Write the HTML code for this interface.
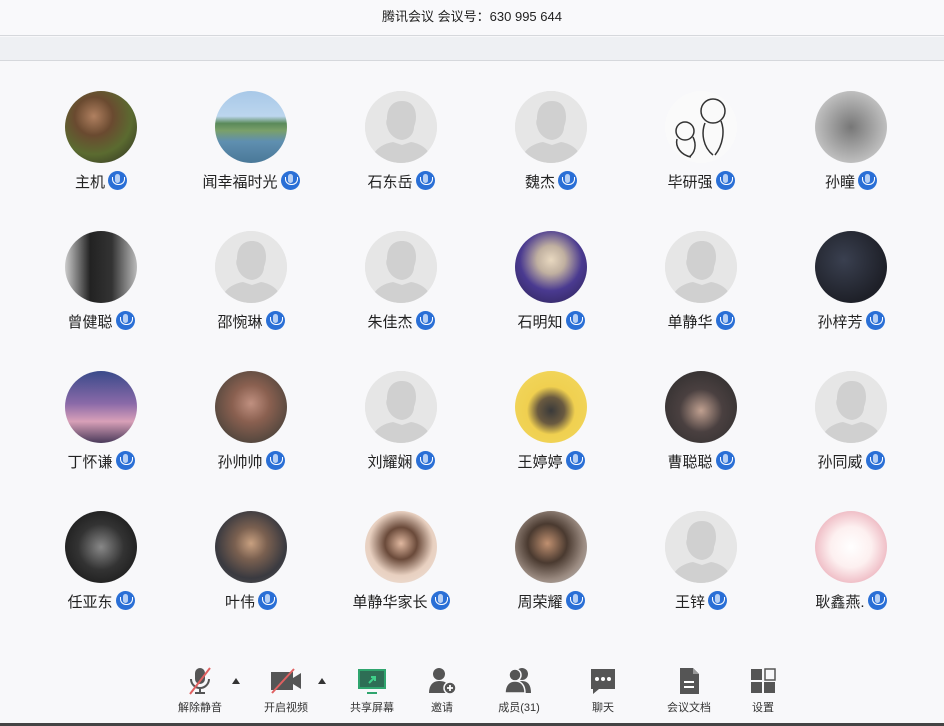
<!DOCTYPE html>
<html><head><meta charset="utf-8"><style>
*{margin:0;padding:0;box-sizing:border-box}
body{width:944px;height:726px;background:#f8f8fa;font-family:"Liberation Sans","Noto Sans CJK SC",sans-serif;position:relative;overflow:hidden;color:#222}
.hdr{position:absolute;left:0;top:0;width:944px;height:36px;background:#f9f9fb;border-bottom:1px solid #d6d8dc;text-align:center;font-size:13px;line-height:33px;color:#222}
.band{position:absolute;left:0;top:37px;width:944px;height:24px;background:#eef0f3;border-bottom:1px solid #d6d8dc}
.cell{position:absolute;width:150px;height:130px}
.av{position:absolute;left:39px;top:0;width:72px;height:72px;border-radius:50%;overflow:hidden;background:#e6e6e6}
.nm{position:absolute;left:0;top:80px;width:150px;text-align:center;font-size:15px;line-height:22px;white-space:nowrap}
.mic{display:inline-block;width:19px;height:19px;border-radius:50%;background:#2a6fd6;vertical-align:-3px;margin-left:3px;position:relative}
.mic:before{content:"";position:absolute;left:7px;top:3px;width:5px;height:9px;border-radius:3px;background:#b8d0f4}
.mic:after{content:"";position:absolute;left:4px;top:6px;width:11px;height:7px;border:1.5px solid #fff;border-top:none;border-radius:0 0 6px 6px}
.tb{position:absolute;top:666px;text-align:center;font-size:11px;color:#333}
.tb .lb{position:absolute;top:33px;left:-40px;width:80px;text-align:center}
.bot{position:absolute;left:0;top:723px;width:944px;height:3px;background:#444}
</style></head><body>
<div class="hdr">腾讯会议 会议号：630 995 644</div>
<div class="band"></div>

<svg width="0" height="0" style="position:absolute"><defs>
<symbol id="def" viewBox="0 0 72 72"><rect width="72" height="72" fill="#e6e6e6"/><path d="M22 28c0-12 6-18 15-18s14 6 14 16c0 4-1 7-2 10 0 6-4 12-12 13-9-1-14-8-15-14-1-2-1-5 0-7z" fill="#d0d0d0"/><path d="M6 72c1-12 10-19 22-21l9 3 9-3c12 2 20 9 21 21z" fill="#d0d0d0"/></symbol>
</defs></svg>

<div class="cell" style="left:26px;top:91px"><div class="av" style="background:radial-gradient(circle at 40% 35%,#b08060 0,#6a4a30 30%,#5b6b30 60%,#2a2a20 100%)"></div><div class="nm">主机<span class="mic"></span></div></div>
<div class="cell" style="left:176px;top:91px"><div class="av" style="background:linear-gradient(#a8c8e8 0,#bcd6ee 35%,#5a8a5a 45%,#7aa06a 55%,#5f8fb0 70%,#4a7898 100%)"></div><div class="nm">闻幸福时光<span class="mic"></span></div></div>
<div class="cell" style="left:326px;top:91px"><svg class="av"><use href="#def"/></svg><div class="nm">石东岳<span class="mic"></span></div></div>
<div class="cell" style="left:476px;top:91px"><svg class="av"><use href="#def"/></svg><div class="nm">魏杰<span class="mic"></span></div></div>
<div class="cell" style="left:626px;top:91px"><svg class="av" viewBox="0 0 72 72" style="background:#fafafa"><g fill="none" stroke="#333" stroke-width="1.5"><circle cx="48" cy="20" r="12"/><path d="M40 32c-4 10-2 24 8 32M56 30c4 10 2 24-6 34"/><circle cx="20" cy="40" r="9"/><path d="M12 48c-2 8 4 16 14 18M28 46c4 8 2 16-4 20"/></g></svg><div class="nm">毕研强<span class="mic"></span></div></div>
<div class="cell" style="left:776px;top:91px"><div class="av" style="background:radial-gradient(circle at 50% 50%,#777 0,#aaa 50%,#ddd 100%)"></div><div class="nm">孙瞳<span class="mic"></span></div></div>

<div class="cell" style="left:26px;top:231px"><div class="av" style="background:linear-gradient(90deg,#ccc 0,#222 35%,#333 65%,#bbb 100%)"></div><div class="nm">曾健聪<span class="mic"></span></div></div>
<div class="cell" style="left:176px;top:231px"><svg class="av"><use href="#def"/></svg><div class="nm">邵惋琳<span class="mic"></span></div></div>
<div class="cell" style="left:326px;top:231px"><svg class="av"><use href="#def"/></svg><div class="nm">朱佳杰<span class="mic"></span></div></div>
<div class="cell" style="left:476px;top:231px"><div class="av" style="background:radial-gradient(circle at 50% 40%,#e8d8c0 0,#c0b0a0 25%,#4a3a90 55%,#2a2050 100%)"></div><div class="nm">石明知<span class="mic"></span></div></div>
<div class="cell" style="left:626px;top:231px"><svg class="av"><use href="#def"/></svg><div class="nm">单静华<span class="mic"></span></div></div>
<div class="cell" style="left:776px;top:231px"><div class="av" style="background:radial-gradient(circle at 40% 40%,#3a4050 0,#1e2028 70%)"></div><div class="nm">孙梓芳<span class="mic"></span></div></div>

<div class="cell" style="left:26px;top:371px"><div class="av" style="background:linear-gradient(#3a4a8a 0,#8a6aa8 45%,#d8a0b8 70%,#4a3a5a 100%)"></div><div class="nm">丁怀谦<span class="mic"></span></div></div>
<div class="cell" style="left:176px;top:371px"><div class="av" style="background:radial-gradient(circle at 50% 45%,#c09080 0,#8a6050 35%,#5a4a40 70%,#333 100%)"></div><div class="nm">孙帅帅<span class="mic"></span></div></div>
<div class="cell" style="left:326px;top:371px"><svg class="av"><use href="#def"/></svg><div class="nm">刘耀娴<span class="mic"></span></div></div>
<div class="cell" style="left:476px;top:371px"><div class="av" style="background:radial-gradient(circle at 50% 55%,#3a3a3a 0,#6a5a40 25%,#f0d050 45%,#f2d860 100%)"></div><div class="nm">王婷婷<span class="mic"></span></div></div>
<div class="cell" style="left:626px;top:371px"><div class="av" style="background:radial-gradient(circle at 50% 55%,#c0a090 0,#4a4040 40%,#2a2a2a 100%)"></div><div class="nm">曹聪聪<span class="mic"></span></div></div>
<div class="cell" style="left:776px;top:371px"><svg class="av"><use href="#def"/></svg><div class="nm">孙同威<span class="mic"></span></div></div>

<div class="cell" style="left:26px;top:511px"><div class="av" style="background:radial-gradient(circle at 50% 50%,#888 0,#333 45%,#111 100%)"></div><div class="nm">任亚东<span class="mic"></span></div></div>
<div class="cell" style="left:176px;top:511px"><div class="av" style="background:radial-gradient(circle at 50% 45%,#c8a080 0,#7a6050 30%,#3a3a40 65%,#555 100%)"></div><div class="nm">叶伟<span class="mic"></span></div></div>
<div class="cell" style="left:326px;top:511px"><div class="av" style="background:radial-gradient(circle at 50% 45%,#e0b8a0 0,#6a4a3a 30%,#e8d0c0 60%,#f0e4dc 100%)"></div><div class="nm">单静华家长<span class="mic"></span></div></div>
<div class="cell" style="left:476px;top:511px"><div class="av" style="background:radial-gradient(circle at 45% 45%,#c09070 0,#4a3a30 35%,#9a8a80 65%,#ccc 100%)"></div><div class="nm">周荣耀<span class="mic"></span></div></div>
<div class="cell" style="left:626px;top:511px"><svg class="av"><use href="#def"/></svg><div class="nm">王锌<span class="mic"></span></div></div>
<div class="cell" style="left:776px;top:511px"><div class="av" style="background:radial-gradient(circle at 50% 50%,#fff 0,#fdf0f0 40%,#f0c0c8 70%,#a8d0f0 100%)"></div><div class="nm">耿鑫燕.<span class="mic"></span></div></div>

<div class="tb" style="left:200px"><svg width="30" height="30" viewBox="0 0 30 30" style="position:absolute;left:-15px;top:0"><rect x="10" y="2" width="10" height="16" rx="5" fill="#555"/><path d="M6 13a9 9 0 0 0 18 0M15 22v5M10 27h10" stroke="#555" stroke-width="2" fill="none"/><path d="M5 28L25 2" stroke="#e06060" stroke-width="2"/></svg><div class="lb">解除静音</div></div>
<div style="position:absolute;left:232px;top:678px;border:4px solid transparent;border-bottom:6px solid #333;border-top:0"></div>
<div class="tb" style="left:286px"><svg width="34" height="30" viewBox="0 0 34 30" style="position:absolute;left:-17px;top:0"><rect x="2" y="6" width="22" height="18" fill="#555"/><path d="M24 12l8-5v16l-8-5z" fill="#555"/><path d="M3 27L25 3" stroke="#e06060" stroke-width="2"/></svg><div class="lb">开启视频</div></div>
<div style="position:absolute;left:318px;top:678px;border:4px solid transparent;border-bottom:6px solid #333;border-top:0"></div>
<div class="tb" style="left:372px"><svg width="30" height="30" viewBox="0 0 30 30" style="position:absolute;left:-15px;top:0"><rect x="1" y="3" width="28" height="20" fill="#2fa56e"/><rect x="3" y="5" width="24" height="16" fill="#2e6e55"/><path d="M10 27h10" stroke="#2fa56e" stroke-width="2"/><path d="M12 17l6-6M14 11h4v4" stroke="#3fd08a" stroke-width="2" fill="none"/></svg><div class="lb">共享屏幕</div></div>
<div class="tb" style="left:442px"><svg width="30" height="30" viewBox="0 0 30 30" style="position:absolute;left:-15px;top:0"><circle cx="12" cy="8" r="6" fill="#555"/><path d="M2 27c0-8 4-12 10-12s8 2 9 5v7z" fill="#555"/><circle cx="23" cy="22" r="6" fill="#555" stroke="#f8f8fa" stroke-width="1.5"/><path d="M23 19v6M20 22h6" stroke="#fff" stroke-width="1.8"/></svg><div class="lb">邀请</div></div>
<div class="tb" style="left:519px"><svg width="32" height="30" viewBox="0 0 32 30" style="position:absolute;left:-16px;top:0"><circle cx="19" cy="8" r="6" fill="#555"/><path d="M10 27c0-8 3-12 9-12s9 4 9 12z" fill="#555"/><circle cx="12" cy="9" r="6" fill="#555" stroke="#f8f8fa" stroke-width="1.5"/><path d="M2 27c0-8 4-12 10-12s10 4 10 12z" fill="#555" stroke="#f8f8fa" stroke-width="1.5"/></svg><div class="lb">成员(31)</div></div>
<div class="tb" style="left:603px"><svg width="30" height="30" viewBox="0 0 30 30" style="position:absolute;left:-15px;top:0"><path d="M3 3h24v20h-16l-6 5v-5h-2z" fill="#555"/><circle cx="9" cy="13" r="2" fill="#fff"/><circle cx="15" cy="13" r="2" fill="#fff"/><circle cx="21" cy="13" r="2" fill="#fff"/></svg><div class="lb">聊天</div></div>
<div class="tb" style="left:689px"><svg width="30" height="30" viewBox="0 0 30 30" style="position:absolute;left:-15px;top:0"><path d="M6 2h13l6 6v20h-19z" fill="#555"/><path d="M19 2v6h6" fill="#999"/><path d="M10 16h10M10 21h10" stroke="#fff" stroke-width="2"/></svg><div class="lb">会议文档</div></div>
<div class="tb" style="left:763px"><svg width="30" height="30" viewBox="0 0 30 30" style="position:absolute;left:-15px;top:0"><rect x="3" y="3" width="11" height="11" fill="#555"/><rect x="17" y="3" width="10" height="11" fill="none" stroke="#555" stroke-width="1.5"/><rect x="3" y="16" width="11" height="11" fill="#555"/><rect x="16" y="16" width="11" height="11" fill="#555"/></svg><div class="lb">设置</div></div>
<div class="bot"></div>
</body></html>
